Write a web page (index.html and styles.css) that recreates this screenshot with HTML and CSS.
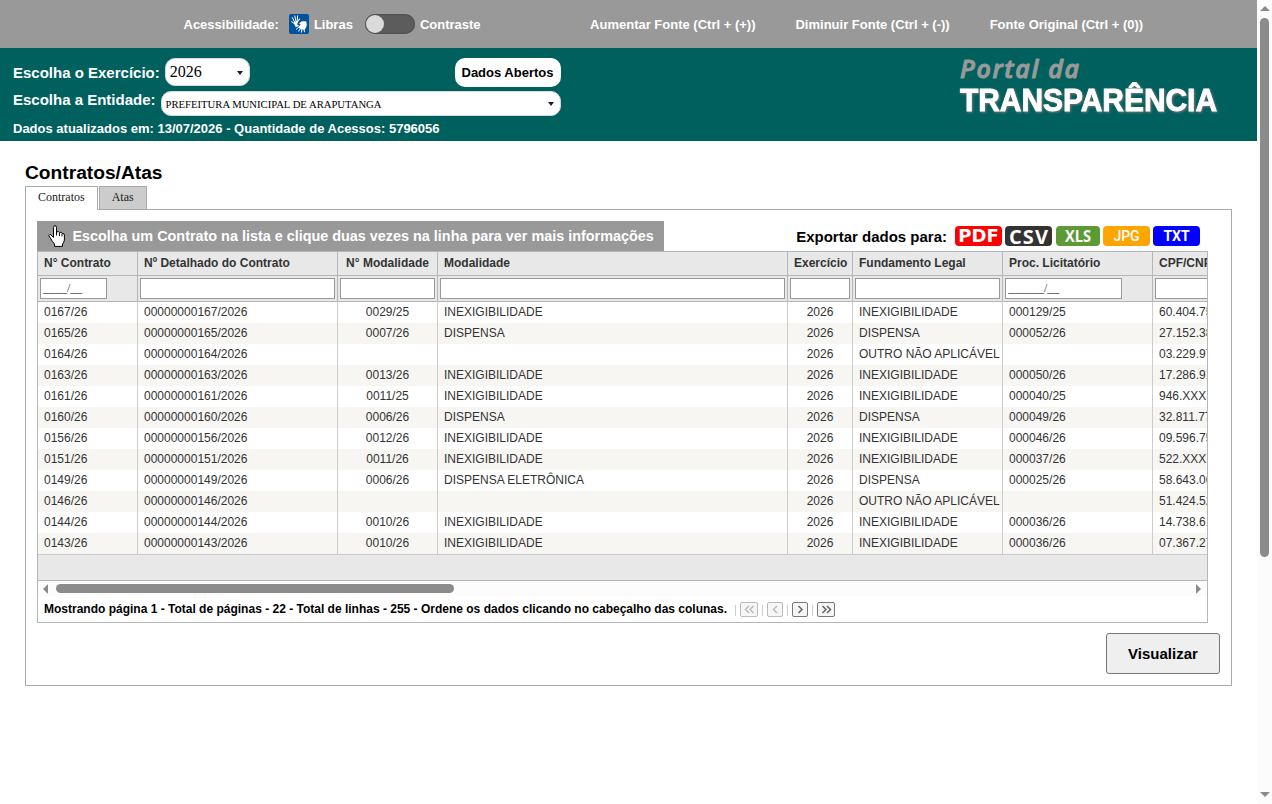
FILE: index.html
```html
<!DOCTYPE html>
<html lang="pt-BR">
<head>
    <meta charset="UTF-8">
    <meta name="viewport" content="width=device-width, initial-scale=1.0">
    <title>Portal da Transparência - Contratos/Atas</title>
    <link rel="stylesheet" href="styles.css">
</head>
<body>
<div class="page">

    <!-- Acessibilidade -->
    <div class="access-bar">
        <span>Acessibilidade:</span>
        <a href="#" class="libras">
            <svg width="20" height="20" viewBox="0 0 20 20">
                <rect width="20" height="20" rx="2" fill="#00529c"/>
                <g fill="none" stroke="#fff" stroke-linecap="round">
                    <path d="M5.6 8L3.3 3.6M6.8 7L5.8 1.9M8.2 6.5L8.6 1.8M5 9.3L2.7 7.8" stroke-width="1"/>
                    <path d="M8.5 7.4L10.6 5" stroke-width="1.1"/>
                    <path d="M11.3 14.5L9.8 17.2M13 15L12.4 18.2M15 15L15.4 17.8M10 13L7.4 15.2M9.5 11.7L6.8 12.6" stroke-width="1"/>
                </g>
                <path d="M4.6 8.7L8.3 6.4L9.3 7.8L8 10.2L9.4 11.6L6.2 12.2Z" fill="#fff"/>
                <path d="M10 9.2L13 7.2L17 7.2Q18.6 11 16.7 14.2L15.2 15.8L11 15L9.6 12.4L11.6 10.6Z" fill="#fff"/>
            </svg>
            Libras
        </a>
        <span class="switch"><span class="knob"></span></span>
        <span class="contrast">Contraste</span>
        <a href="#" class="font-up">Aumentar Fonte (Ctrl + (+))</a>
        <a href="#" class="font-down">Diminuir Fonte (Ctrl + (-))</a>
        <a href="#" class="font-reset">Fonte Original (Ctrl + (0))</a>
    </div>

    <!-- Cabeçalho -->
    <div class="header">
        <div class="filters">
            <div class="filter-row">
                <label>Escolha o Exercício:</label>
                <div class="select select-year">2026</div>
                <button class="open-data">Dados Abertos</button>
            </div>
            <div class="filter-row">
                <label class="entity-label">Escolha a Entidade:</label>
                <div class="select select-entity">PREFEITURA MUNICIPAL DE ARAPUTANGA</div>
            </div>
            <div class="updated">Dados atualizados em: 13/07/2026 - Quantidade de Acessos: 5796056</div>
        </div>
        <svg class="logo" width="270" height="70" viewBox="0 0 270 70">
            <text class="logo-small" x="5" y="26" textLength="119">Portal da</text>
            <text class="logo-big" x="5" y="59" textLength="257" lengthAdjust="spacingAndGlyphs">TRANSPARÊNCIA</text>
        </svg>
    </div>

    <!-- Conteúdo -->
    <div class="content">
        <h1>Contratos/Atas</h1>
        <div class="tabs">
            <div class="tab active">Contratos</div>
            <div class="tab">Atas</div>
        </div>
        <div class="panel">
            <div class="toolbar">
                <div class="hint">
                    <svg width="17" height="22" viewBox="0 0 17 22">
                        <path d="M5.5 12.5V2.5Q5.5 .7 7 .7Q8.5 .7 8.5 2.5V7Q11 5.8 11.3 7.5Q13.8 6.5 14 8.5Q16.4 8 16.4 10V15Q16 17.5 14.5 19V21.4H6.5V19Q4 16.5 3 14L.8 10.8Q1 9 2.7 9.7Z" fill="#fff" stroke="#000"/>
                        <path d="M8.5 7V10.5M11.4 8V11M14 9V11.5" stroke="#000" fill="none"/>
                    </svg>
                    <span>Escolha um Contrato na lista e clique duas vezes na linha para ver mais informações</span>
                </div>
                <div class="export">
                    <span class="export-label">Exportar dados para:</span>
                    <a href="#" class="exp pdf">PDF</a>
                    <a href="#" class="exp csv"><svg width="47" height="20"><text x="4" y="17.5" textLength="39" lengthAdjust="spacing">CSV</text></svg></a>
                    <a href="#" class="exp xls"><svg width="44" height="20"><text x="9" y="16" textLength="26" lengthAdjust="spacingAndGlyphs">XLS</text></svg></a>
                    <a href="#" class="exp jpg">JPG</a>
                    <a href="#" class="exp txt">TXT</a>
                </div>
            </div>

            <div class="grid">
                <div class="grid-scroll">
                    <table>
                        <colgroup>
                            <col class="w100"><col class="w200"><col class="w100"><col class="w350"><col class="w65"><col class="w150"><col class="w150"><col class="w150">
                        </colgroup>
                        <thead>
                            <tr class="titles">
                                <th>N° Contrato</th>
                                <th>Nº Detalhado do Contrato</th>
                                <th class="center">N° Modalidade</th>
                                <th>Modalidade</th>
                                <th>Exercício</th>
                                <th>Fundamento Legal</th>
                                <th>Proc. Licitatório</th>
                                <th>CPF/CNPJ</th>
                            </tr>
                            <tr class="search">
                                <th><input type="text" class="short" value="____/__"></th>
                                <th><input type="text"></th>
                                <th><input type="text"></th>
                                <th><input type="text"></th>
                                <th><input type="text"></th>
                                <th><input type="text"></th>
                                <th><input type="text" class="medium" value="______/__"></th>
                                <th><input type="text"></th>
                            </tr>
                        </thead>
                        <tbody id="rows"></tbody>
                    </table>
                </div>
                <div class="grid-footer"></div>
                <div class="hscroll">
                    <span class="arrow-left"></span>
                    <span class="hthumb"></span>
                    <span class="arrow-right"></span>
                </div>
                <div class="pager">
                    <span class="pager-text">Mostrando página 1 - Total de páginas - 22 - Total de linhas - 255 - Ordene os dados clicando no cabeçalho das colunas.</span>
                    <i class="sep"></i>
                    <span class="pbtn off"><svg width="17" height="13" viewBox="0 0 17 13"><path d="M8 3L4.5 6.5L8 10M12.5 3L9 6.5L12.5 10"/></svg></span>
                    <i class="sep"></i>
                    <span class="pbtn narrow off"><svg width="14" height="13" viewBox="0 0 14 13"><path d="M9 3L5.5 6.5L9 10"/></svg></span>
                    <i class="sep"></i>
                    <span class="pbtn narrow"><svg width="14" height="13" viewBox="0 0 14 13"><path d="M5.5 3L9 6.5L5.5 10"/></svg></span>
                    <i class="sep"></i>
                    <span class="pbtn"><svg width="17" height="13" viewBox="0 0 17 13"><path d="M4.5 3L8 6.5L4.5 10M9 3L12.5 6.5L9 10"/></svg></span>
                </div>
            </div>

            <div class="actions">
                <button class="view">Visualizar</button>
            </div>
        </div>
    </div>
</div>

<div class="vscroll">
    <span class="arrow-up"></span>
    <span class="vthumb"></span>
    <span class="arrow-down"></span>
</div>

<script src="script.js"></script>
</body>
</html>
```

FILE: styles.css
```css
* {
    box-sizing: border-box;
}
body {
    margin: 0;
    height: 804px;
    display: flex;
    overflow: hidden;
    font-family: "Liberation Sans", Arial, sans-serif;
    color: #000;
    background: #fff;
}
a {
    color: inherit;
    text-decoration: none;
}
.page {
    width: 1257px;
}

/* Acessibilidade */
.access-bar {
    height: 48px;
    background: #999;
    color: #fff;
    display: flex;
    align-items: center;
    padding-left: 183.5px;
    font-size: 13px;
    font-weight: bold;
    white-space: nowrap;
}
.libras {
    display: flex;
    align-items: center;
    gap: 5px;
    margin-left: 10px;
}
.switch {
    width: 50px;
    height: 20px;
    margin-left: 12px;
    border-radius: 10px;
    background: #5c5c5c;
    box-shadow: inset 0 0 2px #333;
    padding: 1px;
}
.knob {
    display: block;
    width: 18px;
    height: 18px;
    border-radius: 50%;
    background: #dadada;
}
.contrast {
    margin-left: 5px;
}
.font-up {
    margin-left: 109.5px;
}
.font-down,
.font-reset {
    margin-left: 40px;
}

/* Cabeçalho */
.header {
    height: 93px;
    background: #00605e;
    color: #fff;
    display: flex;
    justify-content: space-between;
    padding: 10px 32px 0 13px;
}
.filters {
    width: 548px;
}
.filter-row {
    display: flex;
    align-items: center;
    height: 29px;
    font-size: 15px;
    font-weight: bold;
}
.filter-row + .filter-row {
    margin-top: 4px;
    height: 25px;
}
.entity-label {
    margin-top: -8px;
}
.select {
    display: flex;
    align-items: center;
    justify-content: space-between;
    background: #fff;
    color: #000;
    border: 1px solid #d5dbe0;
    border-radius: 10px;
    margin-left: 5px;
    font-family: "Liberation Serif", serif;
    font-weight: normal;
}
.select::after {
    content: "";
    margin-top: 1px;
    border: 3.5px solid transparent;
    border-top: 4px solid #1c1c2c;
    border-bottom: 0;
}
.select-year {
    align-self: flex-start;
    width: 85px;
    height: 28px;
    padding: 0 6px 0 4px;
    font-size: 16px;
}
.select-entity {
    flex: 1;
    height: 25px;
    padding: 0 6px 0 4px;
    font-size: 10.67px;
}
.open-data {
    margin-left: auto;
    width: 106px;
    height: 29px;
    padding: 0 1px 0 0;
    border: 0;
    border-radius: 10px;
    background: #fff;
    font: bold 13px "Liberation Sans", Arial, sans-serif;
}
.updated {
    margin-top: 5px;
    font-size: 13px;
    font-weight: bold;
}
.logo {
    margin-top: -6px;
}
.logo-small {
    font: italic 600 25px "Open Sans", sans-serif;
    fill: #999;
    stroke: #999;
    stroke-width: 1px;
    stroke-linejoin: round;
}
.logo-big {
    font: bold 32px "Liberation Sans", Arial, sans-serif;
    fill: #fff;
    stroke: #fff;
    stroke-width: .9px;
    filter: drop-shadow(1px 1px 1px #777);
}

/* Conteúdo */
.content {
    padding: 21px 25px 0;
}
h1 {
    margin: 0;
    height: 24px;
    line-height: 22px;
    font-size: 19.2px;
}
.tabs {
    display: flex;
    gap: 1px;
    font: 12px "Liberation Serif", serif;
}
.tab {
    height: 23px;
    padding: 3px 12px 0;
    border: 1px solid #aaa;
    border-bottom: 0;
    background: #ccc;
    color: #222;
}
.tab.active {
    height: 24px;
    margin-bottom: -1px;
    position: relative;
    background: #fff;
}
.panel {
    height: 477px;
    border: 1px solid #aaa;
    padding: 11px;
}
.toolbar {
    display: flex;
    justify-content: space-between;
    height: 30px;
}
.hint {
    display: flex;
    align-items: center;
    gap: 7.4px;
    padding: 0 10.4px 0 11px;
    background: #999;
    color: #fff;
    font-size: 14.4px;
    font-weight: bold;
    white-space: nowrap;
}
.export {
    display: flex;
    align-items: center;
    gap: 3px;
    margin-right: 20px;
}
.export-label {
    font-size: 15px;
    font-weight: bold;
    margin-right: 5px;
}
.exp {
    width: 47px;
    height: 20px;
    border-radius: 4px;
    color: #fff;
    text-align: center;
    font-size: 14px;
    line-height: 20px;
}
.exp svg {
    display: block;
    fill: #fff;
}
.pdf {
    background: #f00;
    font: bold 18px/20px "DejaVu Sans", sans-serif;
}
.csv {
    margin-right: 1px;
    background: #333;
    font: bold 20px/20px "Open Sans", sans-serif;
}
.xls {
    width: 44px;
    background: #5b9a34;
    font: bold 16px/20px "Open Sans", sans-serif;
}
.jpg {
    background: orange;
    font-family: Roboto, sans-serif;
    font-weight: 500;
}
.txt {
    background: #00f;
    font-family: Roboto, sans-serif;
    font-weight: bold;
}

/* Tabela */
.grid {
    width: 1171px;
    height: 372px;
    border: 1px solid #b4b6b9;
}
.grid-scroll {
    overflow: hidden;
}
table {
    width: 1265px;
    table-layout: fixed;
    border-collapse: separate;
    border-spacing: 0;
    font-size: 12px;
    color: #333;
}
.w65 { width: 65px; }
.w100 { width: 100px; }
.w150 { width: 150px; }
.w200 { width: 200px; }
.w350 { width: 350px; }
th,
td {
    padding: 0 0 0 6px;
    text-align: left;
    white-space: nowrap;
    overflow: hidden;
    border-right: 1px solid #ccc;
}
th {
    background: #e8e8e8;
    border-right-color: #b4b6b9;
    border-bottom: 1px solid #b4b6b9;
}
.titles th {
    height: 24px;
    padding-bottom: 1px;
}
.search th {
    height: 26px;
    padding: 0 2px;
}
.center {
    text-align: center;
    padding-left: 0;
}
td {
    height: 21px;
    padding-bottom: 2px;
}
tbody tr:nth-child(even) {
    background: #f7f6f3;
}
input {
    display: block;
    width: 100%;
    height: 21px;
    padding: 0 2px;
    border: 1px solid #999;
    background: #fff;
    color: #333;
    font: 12px "Liberation Serif", serif;
}
.short {
    width: 67px;
}
.medium {
    width: 117px;
}
.grid-footer {
    height: 27px;
    background: #e8e8e8;
    border-top: 1px solid #ccc;
    border-bottom: 1px solid #b4b6b9;
}

/* Barras de rolagem */
.hscroll {
    display: flex;
    align-items: center;
    height: 15px;
    padding: 0 6px 0 5px;
    background: #fcfcfc;
}
.hthumb {
    width: 398px;
    height: 9px;
    margin-left: 8px;
    border-radius: 5px;
    background: #8b8b8b;
}
.arrow-left,
.arrow-right {
    border: 5px solid transparent;
}
.arrow-left {
    border-left: 0;
    border-right-color: #8b8b8b;
}
.arrow-right {
    margin-left: auto;
    border-right: 0;
    border-left-color: #8b8b8b;
}
.vscroll {
    width: 15px;
    display: flex;
    flex-direction: column;
    align-items: center;
    padding: 6px 0 7px;
    background: #fcfcfc;
}
.vthumb {
    width: 9px;
    height: 539px;
    margin-top: 7px;
    border-radius: 5px;
    background: #8b8b8b;
}
.arrow-up,
.arrow-down {
    border: 5px solid transparent;
}
.arrow-up {
    border-top: 0;
    border-bottom-color: #8b8b8b;
}
.arrow-down {
    margin-top: auto;
    border-bottom: 0;
    border-top-color: #8b8b8b;
}

/* Paginação */
.pager {
    display: flex;
    align-items: center;
    height: 26px;
    padding-left: 6px;
    font-size: 12px;
}
.pager-text {
    font-weight: bold;
    margin-right: 8px;
}
.sep {
    width: 1px;
    height: 11px;
    margin-top: 2px;
    background: #ccc;
}
.pbtn {
    display: flex;
    align-items: center;
    justify-content: center;
    width: 18px;
    height: 15px;
    margin: 0 4px;
    border: 1px solid #777;
    border-radius: 2px;
    background: #f6f6f6;
}
.pbtn.narrow {
    width: 16px;
}
.pbtn svg {
    flex: none;
    fill: none;
    stroke: #666;
    stroke-width: 1.5;
}
.pbtn.off {
    border-color: #bbb;
}
.pbtn.off svg {
    stroke: #bbb;
}
.actions {
    display: flex;
    justify-content: flex-end;
    padding-top: 10px;
}
.view {
    width: 114px;
    height: 41px;
    border: 1px solid #767676;
    border-radius: 3px;
    background: #efefef;
    font: bold 15px "Liberation Sans", Arial, sans-serif;
}
```

FILE: script.js
```js
const contratos = [
    ['0167/26', '00000000167/2026', '0029/25', 'INEXIGIBILIDADE', '2026', 'INEXIGIBILIDADE', '000129/25', '60.404.75'],
    ['0165/26', '00000000165/2026', '0007/26', 'DISPENSA', '2026', 'DISPENSA', '000052/26', '27.152.38'],
    ['0164/26', '00000000164/2026', '', '', '2026', 'OUTRO NÃO APLICÁVEL', '', '03.229.97'],
    ['0163/26', '00000000163/2026', '0013/26', 'INEXIGIBILIDADE', '2026', 'INEXIGIBILIDADE', '000050/26', '17.286.91'],
    ['0161/26', '00000000161/2026', '0011/25', 'INEXIGIBILIDADE', '2026', 'INEXIGIBILIDADE', '000040/25', '946.XXX.'],
    ['0160/26', '00000000160/2026', '0006/26', 'DISPENSA', '2026', 'DISPENSA', '000049/26', '32.811.77'],
    ['0156/26', '00000000156/2026', '0012/26', 'INEXIGIBILIDADE', '2026', 'INEXIGIBILIDADE', '000046/26', '09.596.75'],
    ['0151/26', '00000000151/2026', '0011/26', 'INEXIGIBILIDADE', '2026', 'INEXIGIBILIDADE', '000037/26', '522.XXX.'],
    ['0149/26', '00000000149/2026', '0006/26', 'DISPENSA ELETRÔNICA', '2026', 'DISPENSA', '000025/26', '58.643.06'],
    ['0146/26', '00000000146/2026', '', '', '2026', 'OUTRO NÃO APLICÁVEL', '', '51.424.52'],
    ['0144/26', '00000000144/2026', '0010/26', 'INEXIGIBILIDADE', '2026', 'INEXIGIBILIDADE', '000036/26', '14.738.61'],
    ['0143/26', '00000000143/2026', '0010/26', 'INEXIGIBILIDADE', '2026', 'INEXIGIBILIDADE', '000036/26', '07.367.27']
];

// N° Modalidade e Exercício são centralizados
const centralizadas = [2, 4];

document.getElementById('rows').innerHTML = contratos.map(linha =>
    '<tr>' + linha.map((valor, i) =>
        `<td${centralizadas.includes(i) ? ' class="center"' : ''}>${valor}</td>`
    ).join('') + '</tr>'
).join('');
```
